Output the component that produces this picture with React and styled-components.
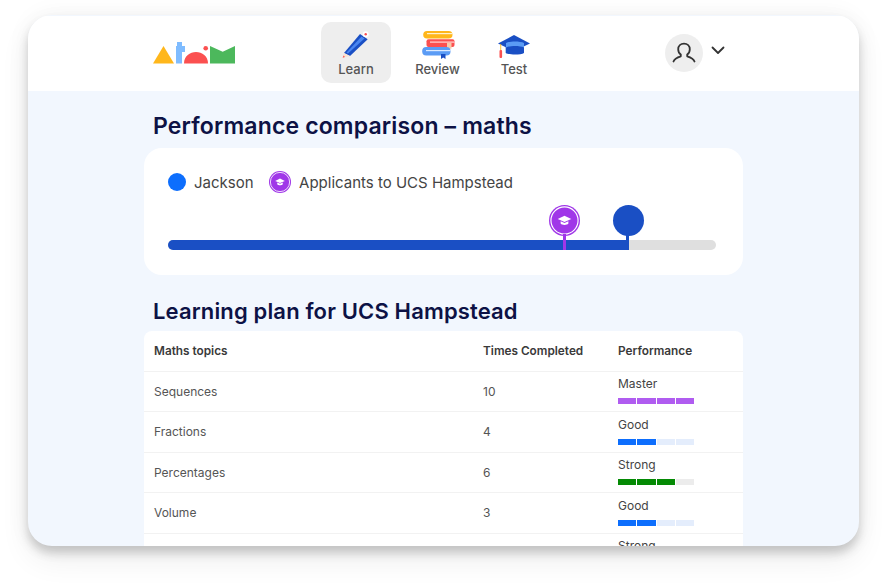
import React from "react";
import styled, { createGlobalStyle } from "styled-components";

const Global = createGlobalStyle`
  html, body { margin: 0; padding: 0; background: #fff; }
  body { width: 887px; height: 588px; overflow: hidden; font-family: Inter, "Liberation Sans", sans-serif; }
`;
const Stage = styled.div`
  width: 887px; height: 588px; padding: 15px 28px 42px; box-sizing: border-box;
`;
const Window = styled.div`
  width: 831px; height: 531px; border-radius: 24px; overflow: hidden; background: #f2f7fe; padding-top: 1px; box-sizing: border-box;
  box-shadow: 0 7px 10px rgba(0,0,0,.17), 0 14px 30px rgba(0,0,0,.07), 0 0 24px rgba(0,0,0,.05);
  display: flex; flex-direction: column;
`;
const Header = styled.header`
  height: 75px; flex: none; background: #fff; display: flex; align-items: flex-start;
`;
const LogoWrap = styled.div`
  width: 293px; flex: none; padding: 25px 0 0 125px; box-sizing: border-box; height: 75px;
`;
const Nav = styled.nav`display: flex; padding-top: 6px; gap: 1px;`;
const NavItem = styled.div`
  width: ${p => p.$w}px; height: 61px; border-radius: 10px; background: ${p => p.$active ? "#eeeeee" : "transparent"};
  display: flex; flex-direction: column; align-items: center; justify-content: flex-end; padding-bottom: 6px; box-sizing: border-box;
  color: #555; font-size: 13px; font-weight: 500; line-height: 16px; gap: 1px;
`;
const User = styled.div`display: flex; align-items: center; gap: 8px; padding: 18px 0 0 0; margin-left: 121px;`;
const Avatar = styled.div`
  width: 38px; height: 38px; border-radius: 50%; background: #eeeeee; display: flex; align-items: center; justify-content: center;
`;
const ChevronBox = styled.svg`margin-top: -6px;`;
const Main = styled.main`flex: 1; padding: 0 116px; min-height: 0; overflow: hidden;`;
const Heading = styled.h2`
  margin: 0 0 0 9px; color: #0d1245; font: 600 ${p => p.$size}px/30px Inter, sans-serif; letter-spacing: .15px;
  padding-top: ${p => p.$top}px;
`;
const Card = styled.section`
  margin-top: 7px; height: 127px; background: #fff; border-radius: 18px; padding: 24px; box-sizing: border-box; position: relative;
`;
const Legend = styled.div`display: flex; align-items: center; height: 20px; color: #444; font-size: 15px;`;
const Dot = styled.span`width: 18px; height: 18px; border-radius: 50%; background: #0d6efd; margin-right: 8px; flex: none;`;
const LegendLabel = styled.span`margin: 0 ${p => p.$mr || 0}px 0 ${p => p.$ml || 0}px;`;
const Track = styled.div`
  position: absolute; left: 24px; top: 92px; width: 548px; height: 10px; border-radius: 5px; background: #dfdfdf;
`;
const Fill = styled.div`height: 100%; width: 461px; background: #1a4fc4; border-radius: 5px 0 0 5px;`;
const Stem = styled.div`
  position: absolute; left: ${p => p.$x}px; top: -6px; width: 3px; height: 16px; background: ${p => p.$c};
`;
const BigPin = styled.div`
  position: absolute; left: 469px; top: 57px; width: 31px; height: 31px; border-radius: 50%; background: #1a4fc4;
`;
const PurplePin = styled.div`position: absolute; left: ${p => p.$x}px; top: ${p => p.$y}px; line-height: 0;`;
const Table = styled.table`
  margin-top: 5px; width: 599px; background: #fff; border-collapse: collapse; table-layout: fixed; font-size: 12px; color: #555;
  border-radius: 8px 8px 0 0; overflow: hidden; display: block;
`;
const Th = styled.th`
  width: ${p => p.$w}px; height: 40px; padding: 0 0 0 ${p => p.$pl}px; box-sizing: border-box; text-align: left; font-weight: 600; color: #3a3a3a;
  font-size: 11.8px; border-bottom: 1px solid #f2f2f2;
`;
const Tr = styled.tr`height: 40.5px;`;
const Td = styled.td`
  padding: 0 0 0 ${p => p.$pl}px; border-bottom: 1px solid #f2f2f2; box-sizing: border-box; height: 40.5px;
`;
const PerfLabel = styled.div`color: #444; line-height: 14px; margin-top: -1px;`;
const Bars = styled.div`display: flex; gap: 1px; margin-top: 7px;`;
const Seg = styled.span`width: 18.25px; height: 6px; background: ${p => p.$c};`;

const Logo = () => (
  <svg width="82" height="24" viewBox="0 0 82 24">
    <path d="M0 22.500L10.500 5L21 22.500Z" fill="#ffb71b" />
    <path d="M23 5H24V1H29V5H32V11H29V22.500H23Z" fill="#7fbcff" />
    <path d="M31 22.500C31 15 37 11 43 11S55 15 55 22.500Z" fill="#fb5050" />
    <circle cx="52.700" cy="7.300" r="2.300" fill="#fb5050" />
    <path d="M57 5L69.700 10.700L82 5V22.500H57Z" fill="#4cb85c" />
  </svg>
);
const Pencil = () => (
  <svg width="30" height="30" viewBox="0 0 30 30">
    <path d="M19 4L26.700 9.300L9 26L3 23Z" fill="#1a4fc4" />
    <path d="M20.500 6.500L23.500 8.500L7 23.500L5.500 22.500Z" fill="#4a86f0" />
    <path d="M3 23L9 26L1.700 27.700Z" fill="#f7e3d3" />
    <path d="M2.500 25.500L4 27L1.700 27.700Z" fill="#fb5050" />
    <circle cx="24.700" cy="4.300" r="3" fill="#fff" />
    <circle cx="24.700" cy="4.300" r="1.200" fill="#fb5050" />
  </svg>
);
const Books = () => (
  <svg width="34" height="30" viewBox="0 0 34 30">
    <rect x="2.200" y="1" width="29.300" height="7.600" rx="3.800" fill="#ffb71b" />
    <rect x="6" y="3" width="25.500" height="1.200" fill="#fff2cf" />
    <rect x="5.500" y="9.300" width="28" height="7.700" rx="2" fill="#fb5050" />
    <rect x="9" y="11.500" width="24.500" height="1.200" fill="#ffd6d6" />
    <rect x="26" y="12.700" width="4.500" height="6" fill="#f7c9a9" />
    <rect x="1.200" y="17" width="28.300" height="8.500" rx="4" fill="#5b9cf5" />
    <rect x="5" y="20" width="24.500" height="1.200" fill="#dcebff" />
    <path d="M20 24H24.500V29L22.200 27.500L20 29Z" fill="#1a4fc4" />
  </svg>
);
const Cap = () => (
  <svg width="34" height="30" viewBox="0 0 34 30">
    <path d="M8.700 14H27V23C24 25 12 25 8.700 23Z" fill="#1a4fc4" />
    <path d="M17 5L33 13.500L17 21L1 13.500Z" fill="#1a4fc4" />
    <path d="M9 13C13 11 23 11 27 13V17.500C23 15.500 13 15.500 9 17.500Z" fill="#5b9cf5" />
    <rect x="3.300" y="14" width=".9" height="6" fill="#ffb71b" />
    <rect x="2.500" y="20" width="2.600" height="8" rx="1" fill="#fb5050" />
  </svg>
);
const PurpleBadge = ({ size }) => (
  <svg width={size} height={size} viewBox="0 0 32 32">
    <circle cx="16" cy="16" r="16" fill="#a037e8" />
    <circle cx="16" cy="16" r="14" fill="none" stroke="#fff" strokeWidth="1.200" />
    <path d="M16 11L23 14.500L16 17.500L9 14.500Z" fill="#fff" />
    <path d="M12 16.700L16 18.600L20 16.700V19.200C18.500 21.200 13.500 21.200 12 19.200Z" fill="#fff" />
  </svg>
);
const UserIcon = () => (
  <svg width="24" height="24" viewBox="0 0 24 24" fill="none" stroke="#333" strokeWidth="1.800" strokeLinecap="round" strokeLinejoin="round">
    <path d="M1.500 20.500C2.500 17.500 5.500 16.300 8.800 15.300V13.600C7.200 12.500 6.200 10.600 6.200 8.300C6.200 5 8.700 2.700 12 2.700S17.800 5 17.800 8.300C17.800 10.600 16.800 12.500 15.200 13.600V15.300C18.500 16.300 21.500 17.500 22.500 20.500" />
  </svg>
);
const Chevron = () => (
  <ChevronBox width="14" height="9" viewBox="0 0 14 9" fill="none" stroke="#333" strokeWidth="1.800" strokeLinecap="round" strokeLinejoin="round">
    <path d="M1.500 1.500L7 7L12.500 1.500" />
  </ChevronBox>
);

const colors = {
  Master: ["#b05cf0", "#b05cf0", 4],
  Good: ["#0d6efd", "#e4edfc", 2],
  Strong: ["#048a04", "#ececec", 3],
};
const rows = [["Sequences", 10, "Master"], ["Fractions", 4, "Good"], ["Percentages", 6, "Strong"], ["Volume", 3, "Good"], ["", "", "Strong"]];

export default function App() {
  return (
    <Stage>
      <Global />
      <Window>
        <Header>
          <LogoWrap><Logo /></LogoWrap>
          <Nav>
            <NavItem $w={70} $active><Pencil />Learn</NavItem>
            <NavItem $w={91}><Books />Review</NavItem>
            <NavItem $w={60}><Cap />Test</NavItem>
          </Nav>
          <User>
            <Avatar><UserIcon /></Avatar>
            <Chevron />
          </User>
        </Header>
        <Main>
          <Heading $top={20} $size={23}>Performance comparison – maths</Heading>
          <Card>
            <Legend>
              <Dot />
              <LegendLabel $mr={15.5}>Jackson</LegendLabel>
              <PurpleBadge size={22} />
              <LegendLabel $ml={8}>Applicants to UCS Hampstead</LegendLabel>
            </Legend>
            <BigPin />
            <PurplePin $x={405} $y={57}><PurpleBadge size={31} /></PurplePin>
            <Track>
              <Fill />
              <Stem $x={395} $c="#a037e8" />
              <Stem $x={458} $c="#1a4fc4" />
            </Track>
          </Card>
          <Heading $top={21} $size={22}>Learning plan for UCS Hampstead</Heading>
          <Table>
            <thead>
              <tr>
                <Th $w={329} $pl={10}>Maths topics</Th>
                <Th $w={145} $pl={10}>Times Completed</Th>
                <Th $w={125} $pl={0}>Performance</Th>
              </tr>
            </thead>
            <tbody>
              {rows.map((r, i) => {
                const [c, off, n] = colors[r[2]];
                return (
                  <Tr key={i}>
                    <Td $pl={10}>{r[0]}</Td>
                    <Td $pl={10}>{r[1]}</Td>
                    <Td $pl={0}>
                      <PerfLabel>{r[2]}</PerfLabel>
                      <Bars>
                        {[0, 1, 2, 3].map(k => <Seg key={k} $c={k < n ? c : off} />)}
                      </Bars>
                    </Td>
                  </Tr>
                );
              })}
            </tbody>
          </Table>
        </Main>
      </Window>
    </Stage>
  );
}
